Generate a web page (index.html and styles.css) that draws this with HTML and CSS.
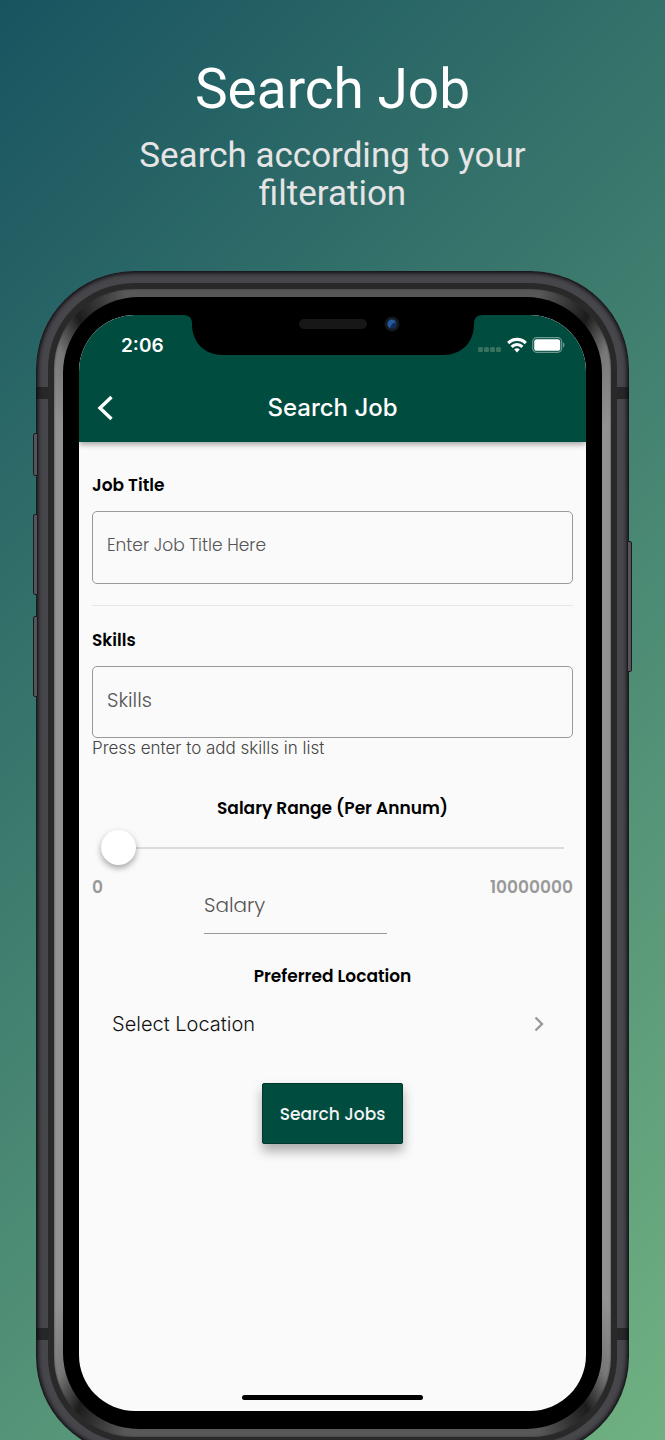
FILE: index.html
```html
<!DOCTYPE html>
<html lang="en">
<head>
    <meta charset="UTF-8">
    <meta name="viewport" content="width=device-width, initial-scale=1.0">
    <title>Search Job</title>
    <link rel="stylesheet" href="styles.css">
</head>
<body>

    <main class="page">
        <h1 class="page-title">Search Job</h1>
        <p class="page-subtitle">Search according to your filteration</p>

        <div class="phone">
            <span class="side-button mute"></span>
            <span class="side-button volume-up"></span>
            <span class="side-button volume-down"></span>
            <span class="side-button power"></span>

            <div class="frame">
                <div class="rim">
                    <div class="glass">
                        <div class="screen">
                            <svg class="notch" width="300" height="40" viewBox="0 0 300 40" aria-hidden="true">
                                <path d="M0 0C6 0 9 3 9 9C9 28 22 40 40 40H260C278 40 291 28 291 9C291 3 294 0 300 0Z" fill="#000"/>
                                <rect x="116" y="4" width="68" height="10" rx="5" fill="#171717"/>
                                <circle cx="209" cy="9" r="7.5" fill="#17181b"/>
                                <circle cx="209" cy="9" r="5" fill="#132c55"/>
                                <path d="M209 4.5A4.5 4.5 0 0 0 207 13L209 9L213 7A4.5 4.5 0 0 0 209 4.5Z" fill="#235a9e"/>
                            </svg>

                            <header class="app-header">
                                <div class="status-bar">
                                    <span class="clock">2:06</span>
                                    <div class="status-icons">
                                        <svg class="signal" width="24" height="6" viewBox="0 0 24 6" fill="#37725f">
                                            <rect x="0" y="1" width="5" height="5" rx="1.5"/>
                                            <rect x="6" y="1" width="5" height="5" rx="1.5"/>
                                            <rect x="12" y="1" width="5" height="5" rx="1.5"/>
                                            <rect x="18" y="1" width="5" height="5" rx="1.5"/>
                                        </svg>
                                        <svg width="20" height="16" viewBox="0 0 20 16" fill="none" stroke="#fff" stroke-width="3.2">
                                            <path d="M1.2 6.2C6.2 1.2 13.8 1.2 18.8 6.2"/>
                                            <path d="M4.6 9.9C7.8 6.9 12.2 6.9 15.4 9.9"/>
                                            <path d="M10 15.5L7.2 12.4C8.8 11 11.2 11 12.8 12.4Z" fill="#fff" stroke="none"/>
                                        </svg>
                                        <svg width="33" height="16" viewBox="0 0 33 16">
                                            <rect x="0.7" y="0.7" width="29" height="14.6" rx="4" fill="none" stroke="#6d988e" stroke-width="1.2"/>
                                            <rect x="2.2" y="2.2" width="26" height="11.6" rx="2.6" fill="#fff"/>
                                            <path d="M31 5.5C33 6.2 33 9.8 31 10.5Z" fill="#6d988e"/>
                                        </svg>
                                    </div>
                                </div>
                                <div class="title-bar">
                                    <button class="back-btn" type="button" aria-label="Back">
                                        <svg width="18" height="26" viewBox="0 0 18 26" fill="none" stroke="#fff" stroke-width="3.4">
                                            <path d="M14.5 2L3 13L14.5 24"/>
                                        </svg>
                                    </button>
                                    <h2>Search Job</h2>
                                </div>
                            </header>

                            <form class="search-form">
                                <label for="job-title">Job Title</label>
                                <input class="box" type="text" id="job-title" placeholder="Enter Job Title Here">

                                <hr>

                                <label for="skills">Skills</label>
                                <input class="box skills" type="text" id="skills" placeholder="Skills">
                                <p class="hint">Press enter to add skills in list</p>

                                <label class="center" for="salary-range">Salary Range (Per Annum)</label>
                                <input class="range" type="range" id="salary-range" min="0" max="10000000" value="0">
                                <div class="range-values">
                                    <span>0</span>
                                    <span>10000000</span>
                                </div>
                                <input class="salary" type="text" placeholder="Salary" aria-label="Salary">

                                <label class="center" for="location">Preferred Location</label>
                                <button class="location" type="button" id="location">
                                    <span>Select Location</span>
                                    <svg width="10" height="16" viewBox="0 0 10 16" fill="none" stroke="#999" stroke-width="2.4">
                                        <path d="M1.5 1.5L8 8L1.5 14.5"/>
                                    </svg>
                                </button>

                                <button class="search-btn" type="button">Search Jobs</button>
                            </form>

                            <div class="home-bar"></div>
                        </div>
                    </div>
                </div>
            </div>
        </div>
    </main>

</body>
</html>
```
FILE: styles.css
```css
* {
    margin: 0;
    padding: 0;
    box-sizing: border-box;
}

body {
    font-family: Poppins, Inter, sans-serif;
    color: #000;
}

/* Page */
.page {
    height: 100vh;
    min-height: 600px;
    padding: 57px 36px 0;
    overflow: hidden;
    background: linear-gradient(135deg, #185460, #70b182);
}

.page-title {
    font-family: Roboto, sans-serif;
    font-size: 55px;
    font-weight: 400;
    line-height: 64px;
    text-align: center;
    color: #fff;
}

.page-subtitle {
    max-width: 420px;
    margin: 16px auto 58px;
    font-family: Roboto, sans-serif;
    font-size: 35px;
    line-height: 38px;
    text-align: center;
    color: #e6e4e4;
}

/* Phone body */
.phone {
    position: relative;
    max-width: 640px;
    margin: 0 auto;
    padding: 12px;
    border-radius: 98px;
    background:
        linear-gradient(transparent 116px, #27272a 116px, #27272a 128px, transparent 128px),
        linear-gradient(to top, transparent 115px, #27272a 115px, #27272a 127px, transparent 127px),
        #47464b;
    box-shadow: inset 0 0 4px 2px #0c0c0f;
}

.side-button {
    position: absolute;
    left: -3px;
    width: 5px;
    border: 1px solid #1b1b1f;
    border-radius: 2px 0 0 2px;
    background: #55545b;
}

.mute {
    top: 162px;
    height: 43px;
}

.volume-up {
    top: 243px;
    height: 81px;
}

.volume-down {
    top: 345px;
    height: 81px;
}

.power {
    top: 270px;
    right: -3px;
    left: auto;
    height: 131px;
    border-radius: 0 2px 2px 0;
}

.frame {
    padding: 6px;
    border-radius: 86px;
    background: #29292a;
}

.rim {
    padding: 8px 9px;
    border-radius: 80px;
    background: conic-gradient(#585858 0deg, #585858 20deg, #1c1c1c 25deg, #777 28deg, #929292 32deg, #929292 148deg, #777 152deg, #1c1c1c 155deg, #585858 160deg, #585858 200deg, #1c1c1c 205deg, #777 208deg, #929292 212deg, #929292 328deg, #777 332deg, #1c1c1c 335deg, #585858 340deg);
    box-shadow: inset 0 0 2px #333;
}

.glass {
    padding: 18px 16px;
    border-radius: 76px;
    background: #000;
}

.screen {
    position: relative;
    display: flex;
    flex-direction: column;
    min-height: 1096px;
    border-radius: 56px;
    overflow: hidden;
    background: #fafafa;
}

.notch {
    position: absolute;
    top: 0;
    left: 50%;
    z-index: 2;
    transform: translateX(-50%);
}

/* App header */
.app-header {
    position: relative;
    z-index: 1;
    border-radius: 56px 56px 0 0;
    background: #004d40;
    color: #fff;
    box-shadow: 0 2px 6px rgba(0, 0, 0, 0.4);
}

.status-bar {
    display: flex;
    justify-content: space-between;
    align-items: center;
    height: 60px;
    padding: 0 21px 0 42px;
}

.clock {
    font-family: Inter, sans-serif;
    font-size: 19px;
    font-weight: 600;
}

.status-icons {
    display: flex;
    align-items: center;
    gap: 5px;
}

.signal {
    margin-top: 8px;
}

.title-bar {
    display: grid;
    grid-template-columns: 40px 1fr 40px;
    align-items: center;
    height: 67px;
    padding: 0 12px 2px;
}

.title-bar h2 {
    font-family: Inter, sans-serif;
    font-size: 24px;
    font-weight: 500;
    text-align: center;
}

.back-btn {
    display: flex;
    padding: 6px;
    border: none;
    background: none;
    cursor: pointer;
}

/* Search form */
.search-form {
    display: flex;
    flex-direction: column;
    padding: 31px 13px 0;
}

.search-form label {
    font-size: 17px;
    font-weight: 600;
    line-height: 24px;
}

.search-form .center {
    text-align: center;
}

.search-form input {
    font-family: inherit;
    font-size: 20px;
    font-weight: 300;
    color: #222;
    outline: none;
}

.search-form input::placeholder {
    color: #555;
    opacity: 1;
}

.search-form .box {
    height: 73px;
    margin-top: 14px;
    padding: 0 14px 5px;
    border: 1px solid #999;
    border-radius: 5px;
    background: none;
    font-size: 17px;
}

.search-form .skills {
    height: 72px;
    font-size: 20px;
}

hr {
    height: 1px;
    margin: 21px 0 22px;
    border: none;
    background: #e6e6e6;
}

.hint {
    margin-bottom: 38px;
    font-family: Inter, sans-serif;
    font-size: 17px;
    font-weight: 300;
    line-height: 20px;
    color: #444;
}

/* Salary slider */
.range {
    height: 36px;
    margin: 10px 9px 11px;
    background: none;
    -webkit-appearance: none;
    appearance: none;
}

.range::-webkit-slider-runnable-track {
    height: 2px;
    background: #dcdcdc;
}

.range::-webkit-slider-thumb {
    -webkit-appearance: none;
    width: 35px;
    height: 35px;
    margin-top: -17px;
    border-radius: 50%;
    background: #fff;
    box-shadow: 0 3px 6px rgba(0, 0, 0, 0.35);
    cursor: pointer;
}

.range-values {
    display: flex;
    justify-content: space-between;
    font-size: 17px;
    font-weight: 600;
    line-height: 20px;
    color: #999;
}

.search-form .salary {
    width: 38%;
    height: 48px;
    margin: -11px 0 30px 112px;
    padding-bottom: 9px;
    border: none;
    border-bottom: 1px solid #999;
    background: none;
}

.location {
    display: flex;
    justify-content: space-between;
    align-items: center;
    height: 48px;
    margin-top: 12px;
    padding: 0 29px 0 20px;
    border: none;
    background: none;
    font-family: Inter, sans-serif;
    font-size: 20px;
    font-weight: 300;
    color: #111;
    cursor: pointer;
}

.search-btn {
    align-self: center;
    height: 61px;
    margin-top: 35px;
    padding: 0 17px;
    border: 1px solid #00372d;
    border-radius: 2px;
    background: #004d40;
    box-shadow: 0 7px 12px rgba(0, 0, 0, 0.32);
    font-family: inherit;
    font-size: 17px;
    font-weight: 500;
    color: #f4f4f4;
    cursor: pointer;
}

.home-bar {
    width: 181px;
    height: 5px;
    margin: auto auto 11px;
    border-radius: 3px;
    background: #000;
}
```
